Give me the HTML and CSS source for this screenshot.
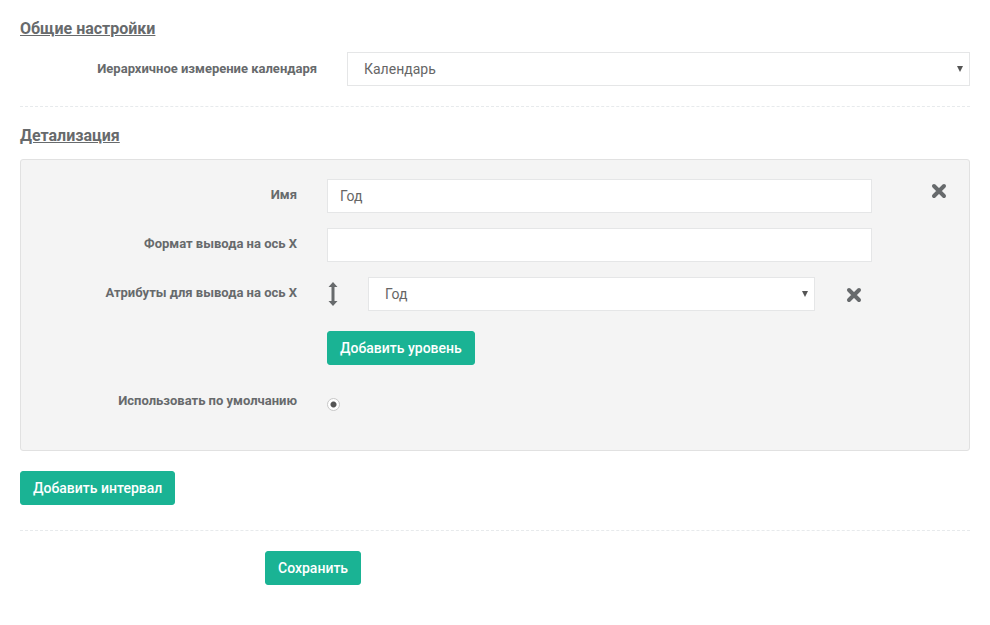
FILE: index.html
```html
<!DOCTYPE html>
<html lang="ru">
<head>
  <meta charset="UTF-8">
  <title>Настройки календаря</title>
  <link rel="stylesheet" href="styles.css">
</head>
<body>

  <div class="page">
    <h3 class="section-title">Общие настройки</h3>
    <div class="form-row">
      <label class="form-label">Иерархичное измерение календаря</label>
      <div class="select-box">
        <span>Календарь</span>
        <i class="caret"></i>
      </div>
    </div>

    <div class="divider"></div>

    <h3 class="section-title">Детализация</h3>
    <div class="level-panel">
      <div class="panel-row">
        <label class="form-label">Имя</label>
        <div class="text-input">Год</div>
        <span class="remove remove-level">
          <svg width="16" height="16" viewBox="0 0 16 16"><path d="M3 3L13 13M13 3L3 13" stroke="#676a6c" stroke-width="4" stroke-linecap="round"/></svg>
        </span>
      </div>
      <div class="panel-row">
        <label class="form-label">Формат вывода на ось X</label>
        <div class="text-input"></div>
      </div>
      <div class="panel-row">
        <label class="form-label">Атрибуты для вывода на ось X</label>
        <div class="attr-list">
          <div class="attr-item">
            <span class="move">
              <svg width="10" height="24" viewBox="0 0 10 24"><path d="M5 0L9.5 5H6.5V19H9.5L5 24L0.5 19H3.5V5H0.5Z" fill="#676a6c"/></svg>
            </span>
            <div class="select-box attr-select">
              <span>Год</span>
              <i class="caret"></i>
            </div>
            <span class="remove">
              <svg width="16" height="16" viewBox="0 0 16 16"><path d="M3 3L13 13M13 3L3 13" stroke="#676a6c" stroke-width="4" stroke-linecap="round"/></svg>
            </span>
          </div>
          <button class="btn">Добавить уровень</button>
        </div>
      </div>
      <div class="panel-row default-row">
        <label class="form-label">Использовать по умолчанию</label>
        <span class="radio"></span>
      </div>
    </div>

    <button class="btn">Добавить интервал</button>

    <div class="divider bottom"></div>

    <button class="btn save">Сохранить</button>
  </div>

</body>
</html>
```

FILE: styles.css
```css
body {
  margin: 0;
  background: #fff;
  color: #676a6c;
  font-family: Roboto, "Open Sans", Arial, sans-serif;
}
.page {
  width: 950px;
  padding: 18px 20px 0;
}
.section-title {
  margin: 0 0 12px;
  font-size: 16px;
  font-weight: bold;
  text-decoration: underline;
  line-height: 22px;
}
.form-row {
  display: grid;
  grid-template-columns: 297px 1fr;
  column-gap: 30px;
  align-items: center;
}
.form-label {
  text-align: right;
  font-size: 13px;
  font-weight: bold;
  line-height: 16px;
}
.select-box {
  display: flex;
  align-items: center;
  justify-content: space-between;
  height: 32px;
  padding: 0 6px 0 16px;
  background: #fff;
  border: 1px solid #e5e6e7;
  font-size: 14px;
  color: #666;
}
.caret {
  width: 0;
  height: 0;
  border-left: 3px solid transparent;
  border-right: 3px solid transparent;
  border-top: 6px solid #555;
}
.divider {
  border-top: 1px dashed #e7eaec;
  margin: 20px 0 18px;
}
.divider.bottom {
  margin: 25px 0 20px;
}
.level-panel {
  background: #f4f4f4;
  border: 1px solid #e1e1e1;
  border-radius: 3px;
  padding: 19px 0 39px;
  margin-bottom: 20px;
}
.panel-row {
  display: grid;
  grid-template-columns: 276px 545px 1fr;
  column-gap: 30px;
  align-items: start;
  margin-bottom: 15px;
}
.panel-row .form-label {
  padding-top: 8px;
}
.text-input {
  height: 32px;
  line-height: 32px;
  padding: 0 12px;
  background: #fff;
  border: 1px solid #e5e6e7;
  font-size: 14px;
  color: #666;
}
.remove {
  display: flex;
  line-height: 0;
}
.remove-level {
  padding: 4px 0 0 29px;
}
.attr-list {
  grid-column: 2 / 4;
}
.attr-item {
  display: flex;
  align-items: center;
  margin-bottom: 20px;
}
.move {
  width: 40px;
  padding-left: 1px;
  line-height: 0;
}
.attr-select {
  width: 423px;
}
.attr-item .remove {
  margin-left: 31px;
  padding-top: 2px;
}
.btn {
  display: block;
  height: 34px;
  padding: 0 12px;
  background: #1ab394;
  border: 1px solid #1ab394;
  border-radius: 3px;
  color: #fff;
  font-family: inherit;
  font-size: 14px;
  font-weight: 500;
  cursor: pointer;
}
.default-row {
  margin-top: 28px;
  margin-bottom: 0;
}
.default-row .form-label {
  padding-top: 0;
}
.radio {
  width: 11px;
  height: 11px;
  margin-top: 5px;
  border: 1px solid #c8c8c8;
  border-radius: 50%;
  background: radial-gradient(circle, #555 0 2.5px, #fff 3.5px);
}
.save {
  margin-left: 245px;
}
```
